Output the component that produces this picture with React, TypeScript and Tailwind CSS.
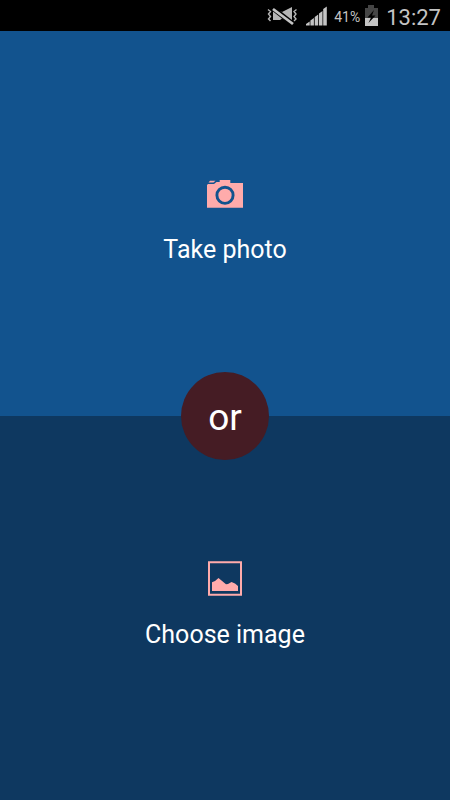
import React from 'react';

function VibrateMutedIcon() {
  return (
    <svg width="31" height="20" viewBox="0 0 31 20" fill="none" aria-hidden="true">
      <path
        d="M1 3.500l2.500 2-2 2.500 2 2.500-2 2.500 2 2M29.500 3.500l-2.500 2 2 2.500-2 2.500 2 2.500-2 2"
        stroke="#b5b5b5"
        strokeWidth="1.400" />
      <path d="M6 5h7l2 1 10-5v16.500L15 12.500l-2 1.500H6z" fill="#b5b5b5" />
      <path d="M5 1.500L26 18" stroke="#000" strokeWidth="5" />
      <path d="M6 3l20 15" stroke="#c4c4c4" strokeWidth="2.800" />
    </svg>);

}

function SignalIcon() {
  return (
    <svg width="22" height="20" viewBox="0 0 22 20" fill="#c4c4c4" aria-hidden="true">
      <path d="M0 19.500V18l3.700-2.500v4zM4.400 19.500V14.500l3.500-2.500v7.500zM8.700 19.500v-8.500l3.500-2.500v11zM13 19.500V7.500l3.500-2.500v14.500zM17.200 19.500V3l3.600-2.500v19z" />
    </svg>);

}

function BatteryIcon() {
  return (
    <svg width="14" height="22" viewBox="0 0 14 22" aria-hidden="true">
      <path d="M4 0h6v3h4v10H1V3h3z" fill="#454545" />
      <path d="M1 13h13v8H1z" fill="#c4c4c4" />
      <path d="M10 5l-6.500 7.500H7L4.500 18l7-7.500H8z" fill="#000" />
    </svg>);

}

function CameraIcon() {
  return (
    <svg width="36" height="36" viewBox="0 0 36 36" fill="#ffabab" aria-hidden="true">
      <path d="M0 9l1-1h6l2.500-2H12.700V4h10.600v3H36v24.700H0z" />
      <path d="M1.500 6.500l1.500-1.700h5.500l-2 1.700z" />
      <circle cx="18" cy="19.300" r="8.100" stroke="#12538e" strokeWidth="2.900" />
    </svg>);

}

function ImageIcon() {
  return (
    <svg width="36" height="36" viewBox="0 0 36 36" aria-hidden="true">
      <rect x="2" y="1.250" width="32" height="32.500" fill="none" stroke="#ffabab" strokeWidth="2" />
      <path d="M5 30v-8.700l3-1.300 3.500-3L19 23.200l2-.2 3.500-2 3.500 1.500 3 2.500v5z" fill="#ffabab" />
    </svg>);

}

function StatusBar() {
  return (
    <header className="flex h-[31px] shrink-0 items-center justify-end bg-black pr-[9px] text-[#c4c4c4]">
      <VibrateMutedIcon />
      <span className="ml-2 flex">
        <SignalIcon />
      </span>
      <span className="ml-1.5 pt-0.5 text-sm">41%</span>
      <span className="ml-1 flex">
        <BatteryIcon />
      </span>
      <time className="ml-2 pt-1 text-[22px] leading-6">13:27</time>
    </header>);

}

export default function App() {
  return (
    <div className="flex min-h-screen flex-col bg-[#0e3860] font-[Roboto,sans-serif]">
      <StatusBar />
      <main className="relative grid flex-1 grid-rows-2 text-[25px] leading-9 text-white">
        <button
          type="button"
          className="flex flex-col items-center justify-center gap-5 bg-[#12538e] pb-0.5">

          <CameraIcon />
          <span>Take photo</span>
        </button>
        <button
          type="button"
          className="flex flex-col items-center justify-center gap-5 bg-[#0e3860] pb-0.5">

          <ImageIcon />
          <span>Choose image</span>
        </button>
        {/* Badge over the seam between the two choices */}
        <div className="pointer-events-none absolute inset-0 flex items-center justify-center">
          <span className="flex size-[88px] items-center justify-center rounded-full bg-[#451c24] pt-1 text-[37px]">
            or
          </span>
        </div>
      </main>
    </div>);

}
